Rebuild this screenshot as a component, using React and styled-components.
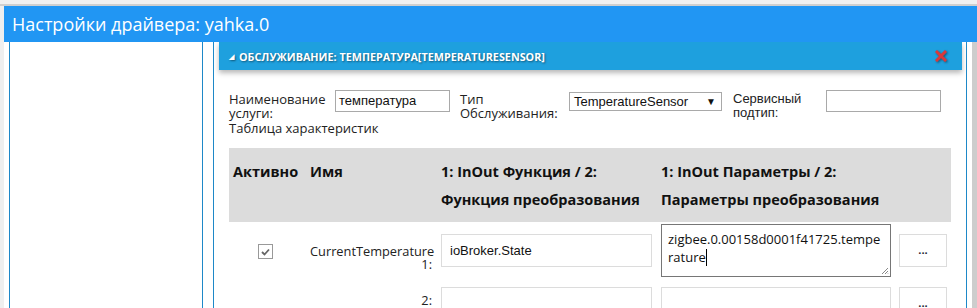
import React from 'react'
import styled, { createGlobalStyle } from 'styled-components'

const GlobalStyle = createGlobalStyle`
  html, body {
    margin: 0;
    padding: 0;
    background: #efefef;
    overflow: hidden;
  }
  body {
    font-family: "Open Sans", "Liberation Sans", sans-serif;
    color: #222;
  }
`

const Page = styled.div`
  width: 977px;
  height: 308px;
  display: flex;
  flex-direction: column;
  overflow: hidden;
`

const TopStrip = styled.div`
  height: 4px;
  border-bottom: 2px solid #cfcfcf;
  background: #f0f0f0;
`

const Dialog = styled.div`
  flex: 1;
  margin-left: 4px;
  display: flex;
  flex-direction: column;
  background: #fff;
  min-height: 0;
`

const TitleBar = styled.div`
  height: 36px;
  background: #2196f3;
  color: #fff;
  font-size: 18px;
  line-height: 36px;
  padding-left: 8px;
  white-space: nowrap;
`

const Body = styled.div`
  flex: 1;
  display: flex;
  min-height: 0;
`

const SidePanel = styled.div`
  flex-shrink: 0;
  width: 192px;
  margin-left: 5px;
  border-left: 1px solid #1e88c8;
  border-right: 1px solid #1e88c8;
`

const MainPanel = styled.div`
  flex-shrink: 0;
  width: 743px;
  margin-left: 10px;
  padding: 0 4px 0 5px;
  border-left: 1px solid #1e88c8;
  border-right: 1px solid #1e88c8;
  overflow: hidden;
`

const Scrollbar = styled.div`
  flex-shrink: 0;
  width: 5px;
  margin-left: 5px;
  background: #cdcdcd;
`

const SectionHeader = styled.div`
  height: 28px;
  background: #1ea0de;
  display: flex;
  align-items: center;
  padding: 0 15px 0 10px;
  box-shadow: 0 3px 5px rgba(0, 0, 0, 0.28);
  color: #fff;
  font-size: 10.8px;
  font-weight: 700;
  text-shadow: 1px 1px 2px rgba(0, 0, 0, 0.45);
  white-space: nowrap;
`

const Caret = styled.span`
  font-size: 7px;
  margin-right: 5px;
`

const Title = styled.span`
  flex: 1;
`

const CloseIcon = styled.svg`
  width: 12px;
  height: 12px;
  filter: drop-shadow(1px 1px 1px rgba(0, 0, 0, 0.45));
`

const Content = styled.div`
  padding: 20px 0 0 10px;
  font-size: 13px;
`

const FormRow = styled.div`
  display: flex;
  align-items: flex-start;
`

const Label = styled.div`
  width: ${p => p.$w}px;
  margin-right: ${p => p.$gap}px;
  padding-top: 2px;
  line-height: 14px;
  font-family: ${p => (p.$arial ? '"Liberation Sans", Arial, sans-serif' : 'inherit')};
`

const TextInput = styled.div`
  box-sizing: border-box;
  width: ${p => p.$w}px;
  height: 22px;
  margin-right: ${p => p.$gap || 0}px;
  border: 1px solid #a9a9a9;
  padding: 0 3px;
  font-family: "Liberation Sans", Arial, sans-serif;
  font-size: 13px;
  line-height: 20px;
  color: #111;
`

const Select = styled.div`
  box-sizing: border-box;
  width: 153px;
  height: 19px;
  margin: 2px 11px 0 0;
  border: 1px solid #a9a9a9;
  padding: 0 5px 0 4px;
  display: flex;
  align-items: center;
  justify-content: space-between;
  font-family: "Liberation Sans", Arial, sans-serif;
  font-size: 13px;
  color: #111;
`

const Arrow = styled.span`
  font-size: 10px;
`

const Caption = styled.div`
  margin-top: 1px;
  line-height: 14px;
`

const Table = styled.table`
  width: 722px;
  margin-top: 13px;
  border-collapse: collapse;
  table-layout: fixed;
`

const HeadRow = styled.tr`
  background: #dcdcdc;
`

const Th = styled.th`
  width: ${p => p.$w}px;
  text-align: left;
  vertical-align: top;
  padding: 10px 4px 8px;
  font-size: 14.5px;
  font-weight: 700;
  line-height: 28px;
  color: #111;
  white-space: nowrap;
`

const Td = styled.td`
  padding: 2px 4px 8px;
  vertical-align: middle;
  text-align: ${p => p.$align || 'left'};
`

const CheckBox = styled.span`
  box-sizing: border-box;
  display: inline-flex;
  align-items: center;
  justify-content: center;
  width: 15px;
  height: 15px;
  margin-left: 25px;
  border: 1px solid #999;
  background: #fff;
  color: #666;
`

const NameLabel = styled.div`
  padding: ${p => (p.$tall ? '14px 1px 0 0' : '0 1px 7px 0')};
  text-align: right;
  font-size: 12.8px;
  line-height: 13px;
  white-space: nowrap;
`

const FieldBox = styled.div`
  box-sizing: border-box;
  width: ${p => p.$w}px;
  height: ${p => p.$h || 33}px;
  border: 1px solid ${p => (p.$dark ? '#767676' : '#dcdcdc')};
  padding: ${p => (p.$dark ? '5px 6px' : '0 8px')};
  font-family: ${p => (p.$dark ? 'inherit' : '"Liberation Sans", Arial, sans-serif')};
  font-size: 13px;
  line-height: ${p => (p.$dark ? '18px' : '31px')};
  color: #111;
  position: relative;
  word-break: break-all;
  background: #fff;
`

const Cursor = styled.span`
  display: inline-block;
  width: 1px;
  height: 17px;
  background: #000;
  vertical-align: -4px;
`

const Grip = styled.svg`
  position: absolute;
  right: 1px;
  bottom: 1px;
  width: 8px;
  height: 8px;
`

const DotsButton = styled.div`
  box-sizing: border-box;
  width: 48px;
  height: 33px;
  border: 1px solid #dcdcdc;
  background: #fff;
  display: flex;
  align-items: center;
  justify-content: center;
  font-size: 11px;
  font-weight: 700;
  color: #223;
  padding-bottom: 3px;
`

const rows = [
  { n: 1, name: 'CurrentTemperature', func: 'ioBroker.State', tall: true },
  { n: 2, name: '', func: '', tall: false },
]

export default function App() {
  return (
    <Page>
      <GlobalStyle />
      <TopStrip />
      <Dialog>
        <TitleBar>Настройки драйвера: yahka.0</TitleBar>
        <Body>
          <SidePanel />
          <MainPanel>
            <SectionHeader>
              <Caret>◢</Caret>
              <Title>ОБСЛУЖИВАНИЕ: ТЕМПЕРАТУРА[TEMPERATURESENSOR]</Title>
              <CloseIcon viewBox="0 0 12 12">
                <path d="M2 2 L10 10 M10 2 L2 10" stroke="#d9383a" strokeWidth="3" strokeLinecap="square" />
              </CloseIcon>
            </SectionHeader>
            <Content>
              <FormRow>
                <Label $w={100} $gap={6}>Наименование услуги:</Label>
                <TextInput $w={115} $gap={10}>температура</TextInput>
                <Label $w={103} $gap={6}>Тип Обслуживания:</Label>
                <Select>
                  <span>TemperatureSensor</span>
                  <Arrow>▼</Arrow>
                </Select>
                <Label $w={87} $gap={6} $arial>Сервисный подтип:</Label>
                <TextInput $w={115} />
              </FormRow>
              <Caption>Таблица характеристик</Caption>
              <Table>
                <thead>
                  <HeadRow>
                    <Th $w={69}>Активно</Th>
                    <Th $w={123}>Имя</Th>
                    <Th $w={212}>1: InOut Функция / 2:<br />Функция преобразования</Th>
                    <Th $w={230}>1: InOut Параметры / 2:<br />Параметры преобразования</Th>
                    <Th $w={48}></Th>
                  </HeadRow>
                </thead>
                <tbody>
                  {rows.map(r => (
                    <tr key={r.n}>
                      <Td>
                        {r.tall && (
                          <CheckBox>
                            <svg width="9" height="8" viewBox="0 0 9 8">
                              <path d="M1 4 L3.5 6.5 L8 1.5" stroke="#666" strokeWidth="1.8" fill="none" />
                            </svg>
                          </CheckBox>
                        )}
                      </Td>
                      <Td $align="right">
                        <NameLabel $tall={r.tall}>
                          {r.name && <>{r.name}<br /></>}
                          {r.n}:
                        </NameLabel>
                      </Td>
                      <Td>
                        <FieldBox $w={211}>{r.func}</FieldBox>
                      </Td>
                      <Td>
                        <FieldBox $w={230} $h={r.tall ? 53 : 33} $dark={r.tall}>
                          {r.tall && (
                            <>
                              zigbee.0.00158d0001f41725.temperature<Cursor />
                              <Grip viewBox="0 0 8 8">
                                <path d="M7 1 L1 7 M7 4 L4 7 M7 6.5 L6.5 7" stroke="#888" strokeWidth="1" />
                              </Grip>
                            </>
                          )}
                        </FieldBox>
                      </Td>
                      <Td>
                        <DotsButton>...</DotsButton>
                      </Td>
                    </tr>
                  ))}
                </tbody>
              </Table>
            </Content>
          </MainPanel>
          <Scrollbar />
        </Body>
      </Dialog>
    </Page>
  )
}
